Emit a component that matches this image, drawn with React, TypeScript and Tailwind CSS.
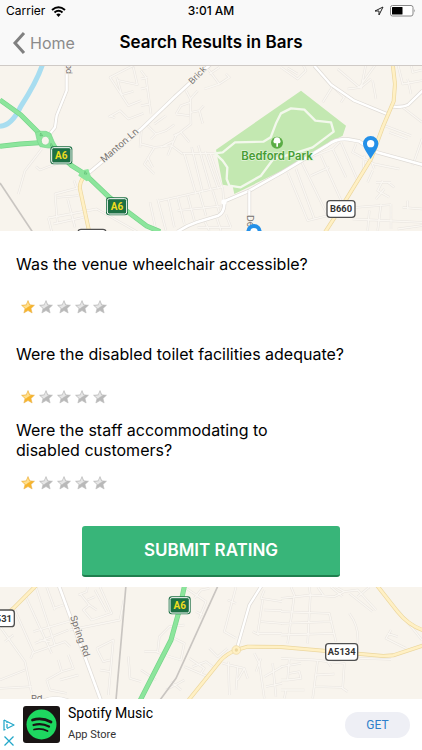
import { useState } from 'react';

const questions = [
  { id: 'access', text: 'Was the venue wheelchair accessible?', space: 'mb-[30px]', gap: 'mb-[26px]' },
  { id: 'toilet', text: 'Were the disabled toilet facilities adequate?', space: 'mb-4', gap: 'mb-[26px]' },
  { id: 'staff', text: 'Were the staff accommodating to disabled customers?', space: 'mb-9', gap: 'mb-4' },
];

function Star({ on }: { on: boolean }) {
  return (
    <svg viewBox="0 0 28 28" className="h-3.5 w-3.5" aria-hidden="true">
      <path
        d="M14 1 L17.6 9.6 L27 10.4 L20 16.8 L22.3 26 L14 21.2 L5.7 26 L8 16.8 L1 10.4 L10.4 9.6 Z"
        fill={on ? '#f7b52c' : '#b9b9b9'}
        stroke={on ? '#e6b050' : '#b9b9b9'}
        strokeWidth="1"
      />
      <path
        d="M14 3 L16.4 10.4 L20 11 Q14 13 9.5 17.5 L8.8 16.5 L3 11.4 L10.8 10.6 Z"
        fill={on ? '#ffdf8f' : '#e6e6e6'}
      />
    </svg>
  );
}

function Rating({ name, label }: { name: string; label: string }) {
  const [value, setValue] = useState(1);

  return (
    <div role="radiogroup" aria-label={label} className="ml-[5px] flex gap-1">
      {[1, 2, 3, 4, 5].map((n) => (
        <label key={n} className="relative block cursor-pointer">
          <input
            type="radio"
            name={name}
            aria-label={`${n}`}
            checked={value === n}
            onChange={() => setValue(n)}
            className="absolute inset-0 m-0 h-full w-full appearance-none opacity-0"
          />
          <Star on={n <= value} />
        </label>
      ))}
    </div>
  );
}

function GreenShield({ x, y }: { x: number; y: number }) {
  return (
    <g transform={`translate(${x} ${y})`}>
      <rect x="-33" y="-27" width="66" height="54" rx="9" fill="#1d7044" />
      <rect x="-29" y="-23" width="58" height="46" rx="6" fill="#1d7044" stroke="#fff" strokeWidth="3" />
      <text y="11" textAnchor="middle" fontSize="30" fontWeight="700" fill="#f0dc1e" fontFamily="Roboto, sans-serif">
        A6
      </text>
    </g>
  );
}

function Shield({ x, y, w, text }: { x: number; y: number; w: number; text: string }) {
  return (
    <g transform={`translate(${x} ${y})`}>
      <rect x={-w / 2} y="-25" width={w} height="50" rx="9" fill="#fff" stroke="#505050" strokeWidth="4" />
      <text y="10" textAnchor="middle" fontSize="28" fontWeight="700" fill="#333" fontFamily='"Liberation Sans Narrow", Roboto, sans-serif'>
        {text}
      </text>
    </g>
  );
}

// white road with a thin grey edge
function Road({ d, w = 8 }: { d: string; w?: number }) {
  return (
    <g fill="none" strokeLinejoin="round">
      <path d={d} stroke="#dfdbd6" strokeWidth={w + 4} />
      <path d={d} stroke="#fff" strokeWidth={w} />
    </g>
  );
}

function Lanes({ d }: { d: string }) {
  return (
    <g fill="none" strokeLinejoin="round">
      <path d={d} stroke="#e8e4df" strokeWidth="7" />
      <path d={d} stroke="#faf7f2" strokeWidth="4" />
    </g>
  );
}

function BRoad({ d }: { d: string }) {
  return (
    <g fill="none" strokeLinejoin="round">
      <path d={d} stroke="#ecd79f" strokeWidth="12" />
      <path d={d} stroke="#fff0c4" strokeWidth="8" />
    </g>
  );
}

function ARoad({ d }: { d: string }) {
  return (
    <g fill="none" strokeLinejoin="round">
      <path d={d} stroke="#76d589" strokeWidth="15" />
      <path d={d} stroke="#8ce59c" strokeWidth="11" />
    </g>
  );
}

function Pin({ x, y }: { x: number; y: number }) {
  return (
    <g transform={`translate(${x} ${y})`}>
      <path d="M0 44 C-6 30 -23 12 -23 -2 A23 23 0 0 1 23 -2 C23 12 6 30 0 44 Z" fill="#2490e8" />
      <circle cy="-2" r="11" fill="#fff" />
    </g>
  );
}

function TopMap() {
  return (
    <svg
      viewBox="0 6 1266 495"
      preserveAspectRatio="xMidYMid slice"
      className="block h-[165px] w-full bg-[#f8f4ed]"
      fontFamily="Inter, Roboto, sans-serif"
      role="img"
      aria-label="Map of Bedford Park"
    >
      <path d="M128 0 Q112 50 62 128 Q35 185 0 187" fill="none" stroke="#a8ddf0" strokeWidth="15" />
      <path d="M0 357 L97 503" fill="none" stroke="#c9c5c1" strokeWidth="5" />

      <Lanes d="M125 255 L75 320 L55 390 M108 308 L120 318 L180 295 M240 370 L165 390 L172 475 M145 462 L290 435 L423 510 M145 462 L155 503 M203 405 L225 490 M222 350 L230 372 M172 400 L235 395 M160 480 L250 460" />
      <Lanes d="M405 2 L330 40 L385 125 L423 110 M350 40 L365 92 L400 82 M400 10 L412 62 L355 50 M325 160 L360 140 L385 165 L430 148 M330 155 L345 162 M424 200 L420 250" />
      <g transform="translate(423 0)">
        <Lanes d="M0 20 L15 40 L30 150 M0 45 L20 40 M0 75 L20 70 M0 125 L28 120 M190 0 L235 60 L265 40 L255 30 M190 75 L235 60 M205 30 L235 10" />
        <Lanes d="M135 80 L148 105 L170 80 M148 105 L150 180 L105 215 L92 245 M105 150 L120 125 L148 115 M105 150 L145 155 M150 145 L175 140 L185 178 M175 140 L188 125 M98 215 L120 205 L145 235 M40 180 L75 155 M20 185 L45 210 L30 225 M45 210 L75 200 L100 182 M0 240 L40 250 L92 245 L125 270 M92 245 L80 275 M40 250 L10 300 L40 330 M20 280 L35 310 M60 250 L95 232" />
        <Lanes d="M125 268 L245 268 M130 270 L165 390 M152 250 L185 385 M172 245 L210 380 M192 262 L232 375 M208 268 L243 372 M50 412 L245 368 M50 405 L75 500 M82 405 L100 490 M110 400 L130 480 M140 395 L160 470 M175 385 L195 455 M215 380 L235 445 M245 370 L248 410 M27 415 L45 500 M110 440 L250 425 M170 490 L270 490 M190 470 L205 500 M225 455 L240 500 M255 452 L270 490" />
      </g>
      <g transform="translate(843 0)">
        <Lanes d="M0 10 L50 45 L75 20 L65 0 M20 12 L50 30 M158 62 L125 115 M158 70 L190 100 L180 115 M170 15 L235 70 L285 0 M255 0 L240 75 M275 50 L285 105 M200 75 L240 70 L270 45 M350 0 L365 60 L423 50 M390 0 L395 25 L423 18 M365 130 L423 175 M380 45 L390 90 M310 185 L390 215 M325 205 L380 225 M423 225 L395 305" />
        <Lanes d="M60 290 L155 255 L195 340 M120 275 L185 420 M155 255 L175 235 M180 235 L230 350 M20 325 L80 470 L180 445 M45 315 L100 465 M60 290 L140 455 M90 335 L145 310 M225 240 L215 265 L280 300 L355 315 M270 290 L280 315 M250 275 L245 330 M285 355 L330 355 M305 350 L290 380 L325 400 M310 375 L285 405 M260 355 L275 320 M320 355 L340 370 M225 430 L330 422 M265 440 L260 500 M300 420 L290 500 M330 420 L330 495 M215 465 L423 475 M365 430 L423 435 M380 410 L380 435 M350 495 L423 485" />
      </g>

      <path
        d="M648 257 L903 80 L1038 185 L1028 215 L983 238 L850 318 L703 390 L698 367 L668 362 Z"
        fill="#c3e8b1"
      />
      <path
        d="M645 268 L668 265 L705 235 L790 233 L812 220 L828 178 L843 148 L873 133 L913 137 L946 170 L993 175 L1001 203 L938 250 L883 268 L820 285 L783 335 L722 370 L688 365 L680 345 L682 310 L668 290 Z"
        fill="none"
        stroke="#f3f8ec"
        strokeWidth="7"
        strokeLinejoin="round"
      />

      <Road d="M200 0 L200 80 L170 155 L165 190 L145 215" w={7} />
      <Road d="M265 328 L423 196 L523 100 L632 0" />
      <Road d="M533 503 Q560 485 590 475 L655 455 Q675 445 673 412 L748 380 L846 325 L983 243 Q1010 222 1045 226 L1078 232 L1120 262 L1270 303" />
      <circle cx="672" cy="414" r="8" fill="#fff" />
      <Road d="M748 380 L748 505" w={7} />
      <Road d="M943 5 L993 62 L1063 110 L1161 150" w={7} />
      <Road d="M1268 80 L1225 122 Q1210 130 1178 128" w={7} />
      <BRoad d="M1178 0 L1185 60 L1181 112 L1148 190 L1113 285 L1033 415 L975 505" />
      <BRoad d="M252 338 Q238 355 240 375 L268 505" />

      <ARoad d="M0 108 L62 152 L122 212" />
      <ARoad d="M0 247 L60 240 L118 236" />
      <ARoad d="M155 240 L183 275 L215 305 L255 330 L328 400 L385 445 L440 486 L480 503" />
      <path d="M106 205 Q122 200 138 202 L152 208 L162 232 L172 250 L145 252 L120 248 L112 232 Z" fill="#8ce59c" stroke="#76d589" strokeWidth="2" />
      <path d="M240 320 L265 315 L275 345 L260 352 L235 335 Z" fill="#8ce59c" />
      <ellipse cx="136" cy="230" rx="12" ry="13" fill="#f8f4ed" stroke="#76d589" strokeWidth="2" />
      <path d="M122 207 l6 8 h-8 z M153 238 l6 8 h-8 z M255 322 l6 8 h-8 z" fill="none" stroke="#5cbb70" strokeWidth="2" />

      <g fill="#74706d" fontSize="28" stroke="#f8f4ed" strokeWidth="5" paintOrder="stroke">
        <text transform="translate(212 30) rotate(-90)" fontSize="25">pd</text>
        <text transform="translate(312 297) rotate(-41)">Manton Ln</text>
        <text transform="translate(577 62) rotate(-46)" fontSize="26">Brick</text>
        <text transform="translate(740 453) rotate(90)">De</text>
      </g>
      <circle cx="831" cy="236" r="18" fill="#5bad45" />
      <path d="M829 248 V238 H824 A6 6 0 0 1 822 228 A9 8 0 0 1 840 228 A6 6 0 0 1 838 238 H834 V248 Z" fill="#fff" />
      <text x="831" y="288" textAnchor="middle" fontSize="34" fontWeight="600" fill="#479d35" stroke="#e2f3d9" strokeWidth="4" paintOrder="stroke">
        Bedford Park
      </text>

      <GreenShield x={184} y={274} />
      <GreenShield x={351} y={427} />
      <Shield x={1023} y={435} w={84} text="B660" />
      <rect x="234" y="496" width="84" height="50" rx="9" fill="#fff" stroke="#505050" strokeWidth="4" />
      <Pin x={1112} y={241} />
      <Pin x={762} y={505} />
    </svg>
  );
}

function BottomMap() {
  return (
    <svg
      viewBox="0 21 1266 336"
      preserveAspectRatio="xMidYMid slice"
      className="block h-28 w-full bg-[#f8f4ed]"
      fontFamily="Inter, Roboto, sans-serif"
      role="img"
      aria-label="Map of Spring Road"
    >
      <Lanes d="M75 45 L155 220 M108 21 L165 195 M140 21 L165 90 M45 90 L100 215 L92 235 M100 155 L220 120 M105 190 L205 150 M95 220 L195 185 L210 200 M118 180 L150 185 M160 85 L190 75 M235 45 L260 35 L262 21 M240 40 L268 75 L250 90 L275 120 L335 100 L300 21 M262 60 L285 50 M268 75 L290 90 M285 30 L320 95 M210 150 L360 120 L372 60" />
      <Lanes d="M0 140 L75 245 L95 340 M0 300 L75 270 M0 325 L95 320 M40 165 L15 185 M140 300 L185 275 L220 265 L205 225 M185 275 L175 240 M140 300 L150 330 L200 340 M180 300 L235 285 M290 205 L340 180 L325 345 M290 205 L310 245 L330 240 M300 270 L330 275 M385 230 L390 295 L423 305" />
      <g transform="translate(423 0)">
        <Lanes d="M130 21 L195 65 L175 115 M160 55 L180 30 L205 25 M165 95 L185 105 M0 270 L45 300 M10 215 L50 215 L55 170 L85 140 L130 135 M45 215 L70 225 M100 175 L130 190 L120 240 L70 225 M75 330 L130 300 M90 305 L120 330 M145 235 L190 265 L180 280 M155 260 L195 245 L215 260 M205 205 L230 230 L260 205 M130 260 L200 290" />
        <Lanes d="M285 21 L250 155 L285 175 M260 60 L285 70 M370 30 L360 55 L423 65 M365 60 L350 160 L423 160 M370 90 L423 92 M360 125 L423 130 M335 155 L355 165 M245 250 L310 265 L320 295 M262 245 L265 345 M290 260 L285 330 M310 265 L290 300 M340 220 L355 250 L370 355 M360 235 L345 275 M370 290 L423 260 M375 320 L423 310 M395 250 L405 350" />
      </g>
      <g transform="translate(843 0)">
        <Lanes d="M0 55 L90 45 M30 21 L40 45 L20 190 M85 21 L88 45 L80 190 M0 95 L145 100 L165 185 M0 130 L150 125 M0 165 L160 160 M90 45 L160 50 L190 35 L165 21 M110 21 L130 50 M150 21 L185 50 M190 35 L230 30 L285 90 M205 40 L275 95 M230 50 L265 21 M205 100 Q235 140 230 190 M330 150 L315 175 L375 205 M320 160 L350 170 M350 90 L423 180" />
        <Lanes d="M0 235 L100 240 L190 250 L185 325 L200 335 M25 235 L20 300 L60 295 L55 275 L25 280 M0 300 L20 300 M110 240 L95 355 M105 285 L160 282 M100 320 L185 322 M0 330 L70 330 M15 330 L10 355 M0 260 L60 250 M235 235 L330 238 M140 245 L150 260" />
      </g>

      <path d="M378 15 L348 360" fill="none" stroke="#c9c5c1" strokeWidth="5" />
      <path d="M655 15 L528 295 L480 360" fill="none" stroke="#c9c5c1" strokeWidth="5" />
      <Road d="M176 15 L302 360" />
      <Road d="M786 15 L748 75 L711 205" w={7} />
      <Road d="M125 364 Q165 345 210 364" />
      <BRoad d="M110 15 L40 85 L0 120" />
      <BRoad d="M566 360 L663 240 Q680 222 708 210 L743 200 L843 201 L1150 228 L1180 226 L1268 197" />
      <BRoad d="M1130 15 L1193 95 Q1225 135 1268 150" />
      <circle cx="709" cy="210" r="13" fill="#fff0c4" stroke="#ecd79f" strokeWidth="2" />
      <circle cx="709" cy="210" r="5" fill="#ecd79f" />
      <ARoad d="M554 15 L538 90 L513 180 L420 362" />

      <g fill="#74706d" fontSize="28" stroke="#f8f4ed" strokeWidth="5" paintOrder="stroke">
        <text transform="translate(210 110) rotate(71)">Spring Rd</text>
        <text x="93" y="366">Rd</text>
      </g>
      <GreenShield x={539} y={76} />
      <Shield x={-6} y={115} w={98} text="A5531" />
      <Shield x={1025} y={216} w={96} text="A5134" />
    </svg>
  );
}

function StatusBar() {
  return (
    <div className="grid grid-cols-3 items-center px-1.5 pt-1 text-xs leading-[14px]">
      <div className="flex items-center gap-1.5">
        <span>Carrier</span>
        <svg viewBox="0 0 30 22" className="h-[11px] w-[15px]" aria-hidden="true">
          <path d="M2 8 Q15 -3 28 8" fill="none" stroke="#000" strokeWidth="4" />
          <path d="M7 13 Q15 6 23 13" fill="none" stroke="#000" strokeWidth="4" />
          <path d="M10.5 17 Q15 13 19.5 17 L15 22 Z" />
        </svg>
      </div>
      <span className="text-center font-medium">3:01 AM</span>
      <div className="flex items-center justify-end gap-1.5">
        <svg viewBox="0 0 20 20" className="h-2.5 w-2.5" aria-hidden="true">
          <path d="M18 2 L2 10 H10 V18 Z" fill="none" stroke="#222" strokeWidth="2" strokeLinejoin="round" />
        </svg>
        <svg viewBox="0 0 52 24" className="h-3 w-[26px]" aria-hidden="true">
          <rect x="1" y="1" width="45" height="21" rx="4" fill="#fff" stroke="#888" strokeWidth="2" />
          <rect x="4" y="4" width="21" height="15" rx="1" />
          <path d="M48 8 Q51 11.5 48 15 Z" fill="#888" />
        </svg>
      </div>
    </div>
  );
}

export default function App() {
  return (
    <div className="bg-white font-[Inter,Roboto,sans-serif] text-black">
      <header className="h-[66px] border-b border-[#cfcac6] bg-[#f9f9f9]">
        <StatusBar />
        <nav className="grid h-[50px] grid-cols-[1fr_auto_1fr] items-center px-3">
          <a href="#home" className="flex items-center gap-1 text-base text-[#8b8b8b]">
            <svg viewBox="0 0 14 22" className="h-[22px] w-3.5" aria-hidden="true">
              <path d="M12 1 L3 11 L12 21" fill="none" stroke="#808080" strokeWidth="3" />
            </svg>
            Home
          </a>
          <h1 className="text-[17px] font-semibold">Search Results in Bars</h1>
        </nav>
      </header>

      <TopMap />

      <form className="px-4 pt-[23px] pb-2.5" onSubmit={(e) => e.preventDefault()}>
        {questions.map((q) => (
          <div key={q.id} className={q.space}>
            <p className={`max-w-[345px] text-base leading-5 ${q.gap} ${q.id === 'staff' ? 'w-[290px]' : ''}`}>{q.text}</p>
            <Rating name={q.id} label={q.text} />
          </div>
        ))}
        <button
          type="submit"
          className="mx-auto block h-[51px] w-[258px] max-w-full rounded-[3px] border-b-2 border-[#1f7f4e] bg-[#38b579] text-[17px] font-semibold text-white"
        >
          SUBMIT RATING
        </button>
      </form>

      <BottomMap />

      <footer className="flex h-[51px] items-center bg-white pr-3 pl-[3px] font-[Roboto,sans-serif]">
        <div className="mt-4 mr-2 flex w-3 flex-col gap-1">
          <button type="button" aria-label="Ad choices">
            <svg viewBox="0 0 24 24" className="h-3 w-3" aria-hidden="true">
              <path d="M2 2 L22 12 L8 19 M2 2 V22 L5 21" fill="none" stroke="#22a7c9" strokeWidth="2.5" strokeLinejoin="round" />
              <path d="M8 10 V18 M8 6 V8" stroke="#22a7c9" strokeWidth="2.5" />
            </svg>
          </button>
          <button type="button" aria-label="Close ad">
            <svg viewBox="0 0 24 24" className="h-3 w-3" aria-hidden="true">
              <path d="M3 3 L21 21 M21 3 L3 21" stroke="#22a7c9" strokeWidth="2.5" />
            </svg>
          </button>
        </div>
        <svg viewBox="0 0 74 74" className="h-[37px] w-[37px] shrink-0" aria-hidden="true">
          <rect width="74" height="74" rx="6" fill="#191414" />
          <circle cx="37" cy="37" r="30" fill="#1ed760" />
          <g fill="none" stroke="#191414" strokeLinecap="round">
            <path d="M19 28 Q38 22 56 32" strokeWidth="5.5" />
            <path d="M21 38 Q37 33 52 41" strokeWidth="4.5" />
            <path d="M22 47 Q36 43 49 50" strokeWidth="3.5" />
          </g>
        </svg>
        <div className="-mt-1 ml-2 flex-1">
          <p className="text-sm leading-5">Spotify Music</p>
          <p className="mt-1 text-[11px] leading-4 text-[#333]">App Store</p>
        </div>
        <button type="button" className="h-[26px] w-[65px] rounded-full bg-[#eeeff5] text-xs text-[#2f7fcb]">
          GET
        </button>
      </footer>
    </div>
  );
}
